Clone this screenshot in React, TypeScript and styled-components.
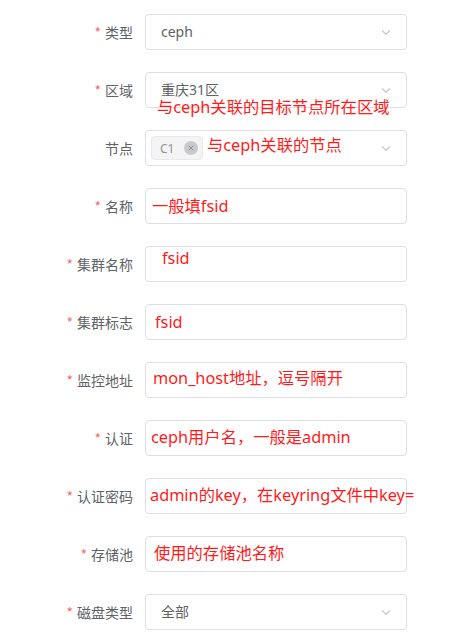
import React from 'react';
import styled, {createGlobalStyle} from "styled-components";

const GlobalStyle = createGlobalStyle`
    html, body {
        margin: 0;
        padding: 0;
        background: #ffffff;
    }
    body {
        font-family: "Noto Sans", "Noto Sans CJK SC", sans-serif;
    }
`

type Note = { text: string, left: number, top: number }

type Field = {
    label: string
    required: boolean
    kind: "select" | "input" | "tags"
    value?: string
    tags?: string[]
    note?: Note
}

const fields: Field[] = [
    {label: "类型", required: true, kind: "select", value: "ceph"},
    {label: "区域", required: true, kind: "select", value: "重庆31区", note: {text: "与ceph关联的目标节点所在区域", left: 11, top: 25}},
    {label: "节点", required: false, kind: "tags", tags: ["C1"], note: {text: "与ceph关联的节点", left: 61, top: 5}},
    {label: "名称", required: true, kind: "input", note: {text: "一般填fsid", left: 6, top: 8}},
    {label: "集群名称", required: true, kind: "input", note: {text: "fsid", left: 16, top: 2}},
    {label: "集群标志", required: true, kind: "input", note: {text: "fsid", left: 9, top: 8}},
    {label: "监控地址", required: true, kind: "input", note: {text: "mon_host地址，逗号隔开", left: 7, top: 6}},
    {label: "认证", required: true, kind: "input", note: {text: "ceph用户名，一般是admin", left: 5, top: 7}},
    {label: "认证密码", required: true, kind: "input", note: {text: "admin的key，在keyring文件中key=", left: 4, top: 7}},
    {label: "存储池", required: true, kind: "input", note: {text: "使用的存储池名称", left: 8, top: 7}},
    {label: "磁盘类型", required: true, kind: "select", value: "全部"},
]

const Chevron = () => (
    <svg width="12" height="12" viewBox="0 0 12 12">
        <path d="M2 4.5 L6 8.2 L10 4.5" fill="none" stroke="#c0c4cc" strokeWidth="1.1"/>
    </svg>
)

const CloseIcon = () => (
    <svg width="10" height="10" viewBox="0 0 10 10">
        <path d="M2.8 2.8 L7.2 7.2 M7.2 2.8 L2.8 7.2" stroke="#909399" strokeWidth="1"/>
    </svg>
)

export default function App() {
    return (
        <>
            <GlobalStyle/>
            <Form>
                {fields.map((field, index) => (
                    <Row key={index}>
                        <Label>
                            {field.required && <Star>*</Star>}
                            {field.label}
                        </Label>
                        <Box>
                            {field.kind === "select" && <Value>{field.value}</Value>}
                            {field.kind === "tags" && (
                                <Tags>
                                    {field.tags?.map((tag) => (
                                        <Tag key={tag}>
                                            {tag}
                                            <TagClose><CloseIcon/></TagClose>
                                        </Tag>
                                    ))}
                                </Tags>
                            )}
                            {field.kind !== "input" && <Arrow><Chevron/></Arrow>}
                            {field.note && (
                                <Annotation style={{left: field.note.left, top: field.note.top}}>
                                    {field.note.text}
                                </Annotation>
                            )}
                        </Box>
                    </Row>
                ))}
            </Form>
        </>
    )
}

const Form = styled.form`
    display: flex;
    flex-direction: column;
    gap: 22px;
    padding: 14px 0 0 0;
    width: 407px;
`

const Row = styled.div`
    display: grid;
    grid-template-columns: 133px 262px;
    grid-template-rows: 36px;
    column-gap: 12px;
    align-items: center;
`

const Label = styled.label`
    display: flex;
    justify-content: flex-end;
    align-items: center;
    height: 36px;
    font-size: 14px;
    line-height: 20px;
    color: #606266;
    font-family: "Noto Sans CJK SC", sans-serif;
`

const Star = styled.span`
    color: #f56c6c;
    margin-right: 4px;
`

const Box = styled.div`
    position: relative;
    box-sizing: border-box;
    height: 36px;
    border: 1px solid #dcdfe6;
    border-radius: 4px;
    display: flex;
    align-items: center;
    padding: 0 14px 0 15px;
    background: #fff;
`

const Value = styled.span`
    flex: 1;
    font-size: 14px;
    line-height: 16px;
    color: #606266;
    font-family: "Noto Sans", "Noto Sans CJK SC", sans-serif;
`

const Tags = styled.div`
    flex: 1;
    display: flex;
    gap: 6px;
    margin-left: -10px;
`

const Tag = styled.span`
    box-sizing: border-box;
    display: inline-flex;
    align-items: center;
    height: 24px;
    padding: 0 4px 0 8px;
    background: #f4f4f5;
    border: 1px solid #e9e9eb;
    border-radius: 4px;
    color: #909399;
    font-size: 12px;
    font-family: "Noto Sans", sans-serif;
`

const TagClose = styled.span`
    display: inline-flex;
    align-items: center;
    justify-content: center;
    width: 14px;
    height: 14px;
    margin-left: 10px;
    border-radius: 50%;
    background: #c8c9cc;
`

const Arrow = styled.span`
    display: inline-flex;
    margin-left: auto;
`

const Annotation = styled.span`
    position: absolute;
    white-space: nowrap;
    font-size: 16.3px;
    line-height: 18px;
    color: #ff1b1b;
    font-family: "Noto Sans", "Noto Sans CJK SC", sans-serif;
    pointer-events: none;
`
